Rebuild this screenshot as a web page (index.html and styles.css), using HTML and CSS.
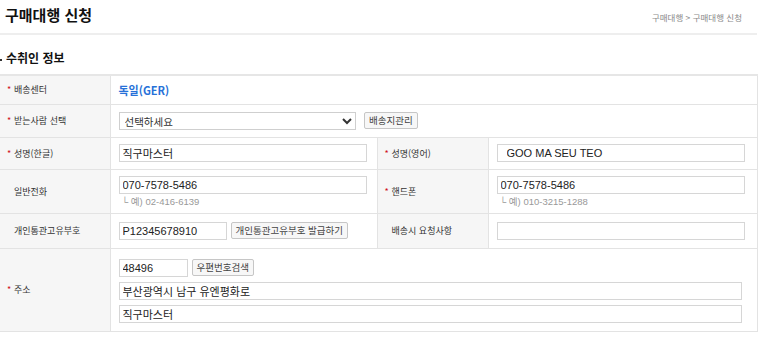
FILE: index.html
```html
<!DOCTYPE html>
<html lang="ko">
<head>
  <meta charset="UTF-8">
  <title>구매대행 신청</title>
  <link rel="stylesheet" href="styles.css">
</head>
<body>
  <div class="page">
    <div class="page-head">
      <h1>구매대행 신청</h1>
      <div class="location">구매대행 &gt; 구매대행 신청</div>
    </div>

    <h2 class="sec-title">수취인 정보</h2>

    <table class="form-table">
      <colgroup>
        <col class="c-label">
        <col class="c-value">
        <col class="c-label2">
        <col class="c-value2">
      </colgroup>
      <tr class="r1">
        <th><span class="req">*</span>배송센터</th>
        <td colspan="3"><span class="center-name">독일(GER)</span></td>
      </tr>
      <tr class="r2">
        <th><span class="req">*</span>받는사람 선택</th>
        <td colspan="3">
          <select class="sel">
            <option>선택하세요</option>
          </select>
          <button class="btn">배송지관리</button>
        </td>
      </tr>
      <tr class="r3">
        <th><span class="req">*</span>성명(한글)</th>
        <td><input type="text" class="inp w-full" value="직구마스터"></td>
        <th><span class="req">*</span>성명(영어)</th>
        <td><input type="text" class="inp w-full eng" value="GOO MA SEU TEO"></td>
      </tr>
      <tr class="r4">
        <th>일반전화</th>
        <td>
          <input type="text" class="inp w-full" value="070-7578-5486">
          <p class="hint">└ 예) 02-416-6139</p>
        </td>
        <th><span class="req">*</span>핸드폰</th>
        <td>
          <input type="text" class="inp w-full" value="070-7578-5486">
          <p class="hint">└ 예) 010-3215-1288</p>
        </td>
      </tr>
      <tr class="r5">
        <th>개인통관고유부호</th>
        <td>
          <input type="text" class="inp w-pccc" value="P12345678910"><button class="btn">개인통관고유부호 발급하기</button>
        </td>
        <th>배송시 요청사항</th>
        <td><input type="text" class="inp w-full" value=""></td>
      </tr>
      <tr class="r6">
        <th><span class="req">*</span>주소</th>
        <td colspan="3">
          <div class="addr-line">
            <input type="text" class="inp w-zip" value="48496"><button class="btn">우편번호검색</button>
          </div>
          <div class="addr-line">
            <input type="text" class="inp w-addr" value="부산광역시 남구 유엔평화로">
          </div>
          <div class="addr-line">
            <input type="text" class="inp w-addr" value="직구마스터">
          </div>
        </td>
      </tr>
    </table>
  </div>
</body>
</html>
```

FILE: styles.css
```css
body {
  margin: 0;
  background: #fff;
  font-family: "Liberation Sans", "Noto Sans CJK KR", sans-serif;
  color: #222;
}
.page {
  width: 757px;
}
.page-head {
  display: flex;
  justify-content: space-between;
  align-items: center;
  height: 33px;
  border-bottom: 2px solid #eeeeee;
}
.page-head h1 {
  margin: 0 0 4px 5px;
  font-family: "Noto Sans CJK KR", sans-serif;
  font-size: 15px;
  font-weight: 700;
  color: #111;
}
.location {
  margin-right: 15px;
  font-family: "Noto Sans CJK KR", sans-serif;
  font-size: 8.5px;
  color: #8a8a8a;
}
.sec-title {
  position: relative;
  margin: 0;
  padding: 14px 0 0 6px;
  height: 25px;
  font-family: "Noto Sans CJK KR", sans-serif;
  font-size: 12px;
  font-weight: 700;
  color: #111;
}
.sec-title:before {
  content: "";
  position: absolute;
  left: 0;
  top: 24px;
  width: 2px;
  height: 2px;
  background: #333;
}
.form-table {
  width: 757px;
  margin-top: 0;
  border-collapse: collapse;
  table-layout: fixed;
  border-top: 2px solid #e6e6e6;
}
.c-label { width: 110px; }
.c-value { width: 267px; }
.c-label2 { width: 111px; }
.c-value2 { width: 269px; }
.form-table th,
.form-table td {
  border: 1px solid #e3e3e3;
  padding: 0 0 0 8px;
  vertical-align: middle;
  text-align: left;
}
.form-table th {
  position: relative;
  padding-left: 14px;
  background: #f6f6f6;
  font-family: "Noto Sans CJK KR", sans-serif;
  font-size: 9px;
  font-weight: 400;
  color: #333;
}
.form-table tr > th:first-child {
  border-left: none;
}
.req {
  position: absolute;
  margin-left: -7px;
  color: #d0111b;
  font-size: 9px;
}
.r1 { height: 29px; }
.r2 { height: 33px; }
.r3 { height: 32px; }
.r4 { height: 44px; }
.r5 { height: 35px; }
.r6 { height: 83px; }

.center-name {
  font-family: "Noto Sans CJK KR", sans-serif;
  font-size: 11px;
  font-weight: 700;
  color: #2771d8;
}
.inp {
  box-sizing: border-box;
  height: 18px;
  margin: 0;
  padding: 0 3px;
  border: 1px solid #d6d6d6;
  border-radius: 0;
  font-family: "Liberation Sans", "Noto Sans CJK KR", sans-serif;
  font-size: 11px;
  color: #222;
  vertical-align: middle;
}
.w-full { width: 248px; }
.w-pccc { width: 108px; }
.w-zip { width: 69px; }
.w-addr { width: 623px; }
.eng { padding-left: 9px; }
.sel {
  box-sizing: border-box;
  width: 237px;
  height: 18px;
  margin: 0;
  padding: 0 0 0 1px;
  border: 1px solid #cfcfcf;
  border-radius: 0;
  background: #fff;
  font-family: "Noto Sans CJK KR", sans-serif;
  font-size: 10.5px;
  color: #333;
  vertical-align: middle;
}
.btn {
  box-sizing: border-box;
  height: 17px;
  margin: 0 0 0 4px;
  padding: 0 4px;
  border: 1px solid #c6c6c6;
  border-radius: 2px;
  background: #f7f7f7;
  font-family: "Noto Sans CJK KR", sans-serif;
  font-size: 9.5px;
  line-height: 15px;
  color: #444;
  vertical-align: middle;
  cursor: pointer;
}
.hint {
  margin: 1px 0 0 3px;
  font-size: 9.5px;
  color: #999;
  line-height: 14px;
}
.r4 td {
  vertical-align: top;
  padding-top: 6px;
}
.r6 td {
  padding-top: 2px;
}
.addr-line {
  display: flex;
  align-items: center;
  height: 18px;
  margin-bottom: 5px;
}
.addr-line:last-child {
  margin-bottom: 0;
}
```
